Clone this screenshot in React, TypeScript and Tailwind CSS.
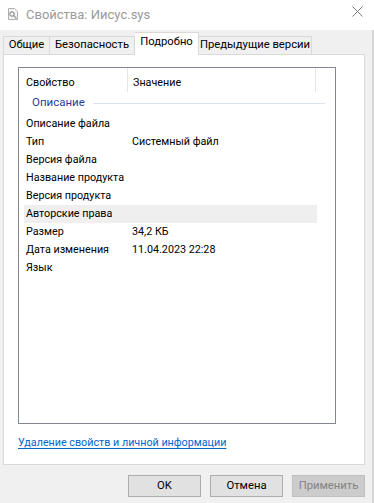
import React from "react";

const rows: [string, string][] = [
  ["Описание файла", ""],
  ["Тип", "Системный файл"],
  ["Версия файла", ""],
  ["Название продукта", ""],
  ["Версия продукта", ""],
  ["Авторские права", ""],
  ["Размер", "34,2 КБ"],
  ["Дата изменения", "11.04.2023 22:28"],
  ["Язык", ""],
];

export default function App() {
  return (
    <div
      className="relative w-[374px] h-[503px] overflow-hidden bg-[#f0f0f0] text-[10.75px] text-black"
      style={{ fontFamily: 'Roboto, "Liberation Sans", sans-serif' }}
    >
      {/* title bar */}
      <div className="h-[30px] bg-white flex items-center">
        <svg width="12" height="12" viewBox="0 0 12 12" className="ml-[7px] mt-[-2px]">
          <path d="M1.5 0.5h6l3 3v8h-9z" fill="#f4f4f4" stroke="#b0b0b0" />
          <circle cx="5" cy="6" r="2.2" fill="none" stroke="#9a9a9a" strokeWidth="1.2" />
          <path d="M6.5 7.5l3 3" stroke="#9a9a9a" strokeWidth="1.2" />
        </svg>
        <span className="ml-[7px] text-[#9a9a9a] text-[13px] leading-none mt-[-2px]">Свойства: Иисус.sys</span>
        <div className="ml-auto mr-[11px] mt-[-8px]">
          <svg width="11" height="11" viewBox="0 0 11 11">
            <path d="M0.5 0.5l10 10M10.5 0.5l-10 10" stroke="#7a7a7a" strokeWidth="1" />
          </svg>
        </div>
      </div>

      {/* tabs */}
      <div className="flex items-end h-[24px] pl-[3px] relative z-10 whitespace-nowrap text-[11.25px]">
        <div className="w-[47px] h-[18px] flex items-center justify-center border border-b-0 border-[#d9d9d9] bg-[#f0f0f0]">Общие</div>
        <div className="w-[85px] h-[18px] flex items-center justify-center border border-b-0 border-l-0 border-[#d9d9d9] bg-[#f0f0f0]">Безопасность</div>
        <div className="w-[64px] h-[23px] pb-[4px] flex items-center justify-center border border-b-0 border-l-0 border-[#d9d9d9] bg-white mb-[-1px]">Подробно</div>
        <div className="w-[113px] h-[18px] flex items-center justify-center border border-b-0 border-l-0 border-[#d9d9d9] bg-[#f0f0f0]">Предыдущие версии</div>
      </div>

      {/* panel */}
      <div className="mx-[3px] w-[362px] h-[411px] bg-white border border-[#d9d9d9] flex flex-col pl-[14px] pt-[12px]">
        <div className="w-[318px] h-[357px] border border-[#828790] flex flex-col">
          {/* header */}
          <div className="h-[25px] flex items-start relative">
            <div className="w-[108px] pl-[7px] pt-[7px]">Свойство</div>
            <div className="w-px h-[24px] bg-[#e5e5e5]" />
            <div className="pl-[5px] pt-[7px] flex-1">Значение</div>
            <div className="w-px h-[24px] bg-[#e5e5e5] mr-[19px]" />
          </div>
          {/* group */}
          <div className="h-[20px] flex items-center pl-[13px]">
            <span className="text-[#1e3c9a] text-[11.5px]">Описание</span>
            <div className="ml-[8px] h-px bg-[#dbe4ee] w-[232px]" />
          </div>
          <div className="h-[2px]" />
          {rows.map(([k, v], i) => (
            <div
              key={i}
              className={
                "h-[18px] flex items-center ml-[5px] w-[293px] " +
                (i === 5 ? "bg-[#efefef]" : "")
              }
            >
              <div className="w-[108px] pl-[2px] whitespace-nowrap">{k}</div>
              <div className="whitespace-nowrap">{v}</div>
            </div>
          ))}
        </div>
        <div className="mt-[11px] h-[16px] flex items-center">
          <span className="text-[#0066cc] underline underline-offset-2">Удаление свойств и личной информации</span>
        </div>
      </div>

      {/* buttons */}
      <div className="flex justify-end gap-[9px] pr-[9px] mt-[10px] text-[11.25px]">
        <div className="w-[73px] h-[22px] flex items-center justify-center bg-[#e1e1e1] border border-[#adadad]">OK</div>
        <div className="w-[73px] h-[22px] flex items-center justify-center bg-[#e1e1e1] border border-[#adadad]">Отмена</div>
        <div className="w-[73px] h-[22px] flex items-center justify-center bg-[#cccccc] border border-[#bfbfbf] text-[#838383]">Применить</div>
      </div>

      <div className="absolute right-0 top-[30px] w-[2px] h-[473px] bg-[#d6d6d6]" />
    </div>
  );
}
